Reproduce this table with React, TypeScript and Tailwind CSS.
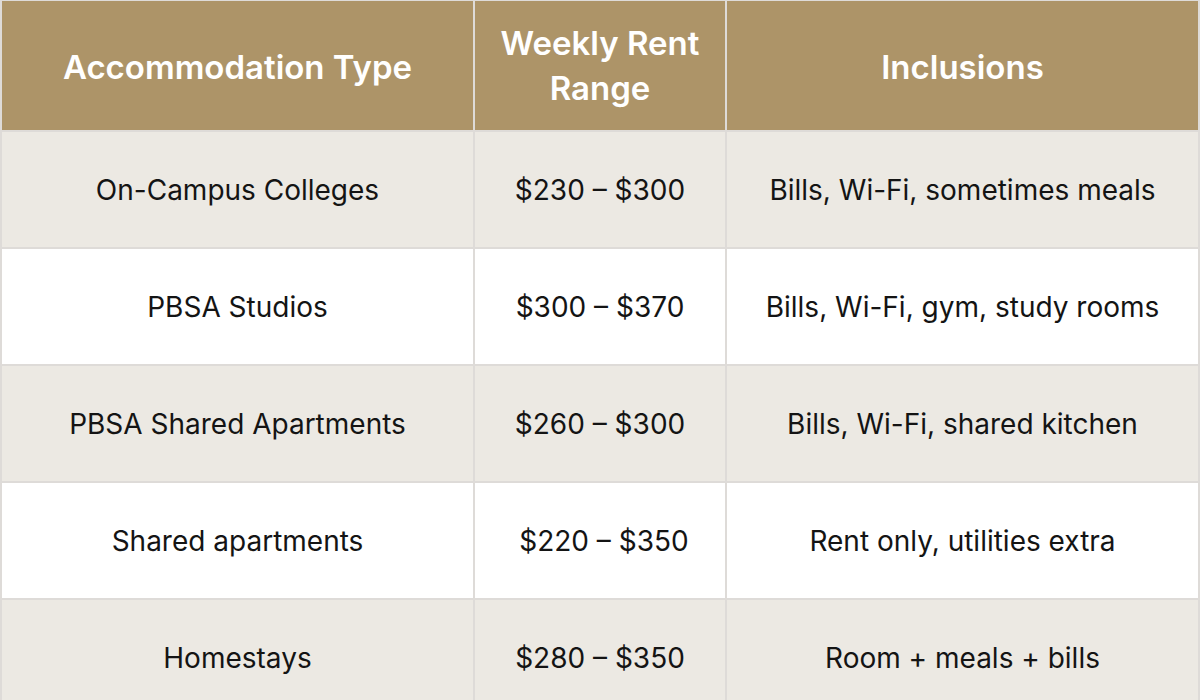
import React from 'react';

type Row = {
  type: string;
  rent: string;
  inclusions: string;
};

const rows: Row[] = [
  { type: 'On-Campus Colleges', rent: '$230 – $300', inclusions: 'Bills, Wi-Fi, sometimes meals' },
  { type: 'PBSA Studios', rent: '$300 – $370', inclusions: 'Bills, Wi-Fi, gym, study rooms' },
  { type: 'PBSA Shared Apartments', rent: '$260 – $300', inclusions: 'Bills, Wi-Fi, shared kitchen' },
  { type: 'Shared apartments', rent: ' $220 – $350', inclusions: 'Rent only, utilities extra' },
  { type: 'Homestays', rent: '$280 – $350', inclusions: 'Room + meals + bills' },
];

const App: React.FC = () => {
  const headCell = 'bg-[#ad9468] text-white font-semibold text-[33px] leading-[45px] flex items-center justify-center text-center px-6';
  return (
    <div
      className="w-[1200px] h-[700px] overflow-hidden bg-white"
      style={{ fontFamily: 'Inter, "Noto Sans", sans-serif' }}
    >
      <div className="grid grid-cols-[471px_250px_1fr] gap-[2px] bg-[#dedbd8] p-[2px] pt-[1px]">
        <div className={`${headCell} h-[129px] pt-1`}>Accommodation Type</div>
        <div className={`${headCell} h-[129px]`}>
          <span>Weekly Rent<br />Range</span>
        </div>
        <div className={`${headCell} h-[129px] pt-1`}>Inclusions</div>

        {rows.map((row, i) => {
          const bg = i % 2 === 0 ? 'bg-[#ece9e3]' : 'bg-white';
          const cell = `${bg} h-[115px] flex items-center justify-center text-center text-[28px] text-[#141414] whitespace-pre`;
          return (
            <React.Fragment key={row.type}>
              <div className={cell}>{row.type}</div>
              <div className={cell}>{row.rent}</div>
              <div className={cell}>{row.inclusions}</div>
            </React.Fragment>
          );
        })}
      </div>
    </div>
  );
};

export default App;
